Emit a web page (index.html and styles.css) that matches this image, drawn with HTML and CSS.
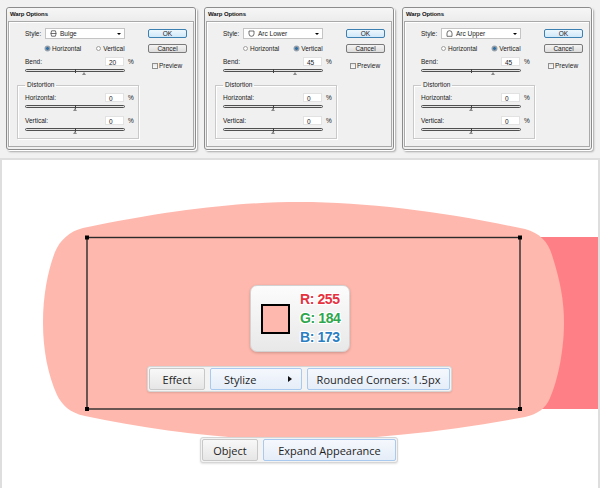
FILE: index.html
```html
<!DOCTYPE html>
<html>

<head>
  <title>Warp Options - Rounded Corners</title>
  <link rel="stylesheet" href="styles.css">
</head>

<body>
  <div class="dialogs">
    <!-- Bulge -->
    <div class="dialog">
      <div class="dialog-title">Warp Options</div>
      <div class="dialog-body">
        <div class="dialog-main">
          <div class="row style-row">
            <span class="lbl">Style:</span>
            <div class="select">
              <svg class="warp-icon" viewBox="0 0 7 7"><path d="M1.6 0.8 Q0.2 3.5 1.6 6.2 H5.4 Q6.8 3.5 5.4 0.8 Z M0.8 3.5 H6.2" /></svg>
              <span class="select-text">Bulge</span>
              <span class="caret"></span>
            </div>
          </div>
          <div class="row radio-row">
            <span class="radio on"></span><span>Horizontal</span>
            <span class="radio second"></span><span>Vertical</span>
          </div>
          <div class="row value-row">
            <span class="lbl">Bend:</span><span class="field">20</span><span class="pct">%</span>
          </div>
          <div class="slider"><i class="tick"></i><i class="thumb" style="left: 60%"></i></div>
          <fieldset class="group">
            <legend>Distortion</legend>
            <div class="row value-row first">
              <span class="lbl">Horizontal:</span><span class="field">0</span><span class="pct">%</span>
            </div>
            <div class="slider"><i class="tick"></i><i class="thumb" style="left: 50%"></i></div>
            <div class="row value-row">
              <span class="lbl">Vertical:</span><span class="field">0</span><span class="pct">%</span>
            </div>
            <div class="slider"><i class="tick"></i><i class="thumb" style="left: 50%"></i></div>
          </fieldset>
        </div>
        <div class="dialog-side">
          <div class="btn default">OK</div>
          <div class="btn">Cancel</div>
          <div class="check"><span class="box"></span>Preview</div>
        </div>
      </div>
    </div>

    <!-- Arc Lower -->
    <div class="dialog">
      <div class="dialog-title">Warp Options</div>
      <div class="dialog-body">
        <div class="dialog-main">
          <div class="row style-row">
            <span class="lbl">Style:</span>
            <div class="select">
              <svg class="warp-icon" viewBox="0 0 7 7"><path d="M1 1 H6 V3.8 Q6 6.3 3.5 6.3 Q1 6.3 1 3.8 Z" /></svg>
              <span class="select-text">Arc Lower</span>
              <span class="caret"></span>
            </div>
          </div>
          <div class="row radio-row">
            <span class="radio"></span><span>Horizontal</span>
            <span class="radio on second"></span><span>Vertical</span>
          </div>
          <div class="row value-row">
            <span class="lbl">Bend:</span><span class="field">45</span><span class="pct">%</span>
          </div>
          <div class="slider"><i class="tick"></i><i class="thumb" style="left: 72.5%"></i></div>
          <fieldset class="group">
            <legend>Distortion</legend>
            <div class="row value-row first">
              <span class="lbl">Horizontal:</span><span class="field">0</span><span class="pct">%</span>
            </div>
            <div class="slider"><i class="tick"></i><i class="thumb" style="left: 50%"></i></div>
            <div class="row value-row">
              <span class="lbl">Vertical:</span><span class="field">0</span><span class="pct">%</span>
            </div>
            <div class="slider"><i class="tick"></i><i class="thumb" style="left: 50%"></i></div>
          </fieldset>
        </div>
        <div class="dialog-side">
          <div class="btn default">OK</div>
          <div class="btn">Cancel</div>
          <div class="check"><span class="box"></span>Preview</div>
        </div>
      </div>
    </div>

    <!-- Arc Upper -->
    <div class="dialog">
      <div class="dialog-title">Warp Options</div>
      <div class="dialog-body">
        <div class="dialog-main">
          <div class="row style-row">
            <span class="lbl">Style:</span>
            <div class="select">
              <svg class="warp-icon" viewBox="0 0 7 7"><path d="M1 6.3 V3.2 Q1 0.7 3.5 0.7 Q6 0.7 6 3.2 V6.3 Z" /></svg>
              <span class="select-text">Arc Upper</span>
              <span class="caret"></span>
            </div>
          </div>
          <div class="row radio-row">
            <span class="radio"></span><span>Horizontal</span>
            <span class="radio on second"></span><span>Vertical</span>
          </div>
          <div class="row value-row">
            <span class="lbl">Bend:</span><span class="field">45</span><span class="pct">%</span>
          </div>
          <div class="slider"><i class="tick"></i><i class="thumb" style="left: 72.5%"></i></div>
          <fieldset class="group">
            <legend>Distortion</legend>
            <div class="row value-row first">
              <span class="lbl">Horizontal:</span><span class="field">0</span><span class="pct">%</span>
            </div>
            <div class="slider"><i class="tick"></i><i class="thumb" style="left: 50%"></i></div>
            <div class="row value-row">
              <span class="lbl">Vertical:</span><span class="field">0</span><span class="pct">%</span>
            </div>
            <div class="slider"><i class="tick"></i><i class="thumb" style="left: 50%"></i></div>
          </fieldset>
        </div>
        <div class="dialog-side">
          <div class="btn default">OK</div>
          <div class="btn">Cancel</div>
          <div class="check"><span class="box"></span>Preview</div>
        </div>
      </div>
    </div>
  </div>

  <div class="artboard">
    <svg class="canvas" viewBox="0 158 598 330">
      <rect x="530" y="237" width="70" height="172" fill="#ff7f86" />
      <path fill="#ffb8ad" d="M83 228 C170 210 240 202 300 202 C370 202 450 213 525 229 C540 233 548 242 552 255
        C560 280 564 300 564 323 C564 350 558 380 550 398 C546 408 538 414 525 417
        C450 431 370 440 300 440 C230 440 150 430 85 416 C70 413 62 405 57 395
        C48 375 43 350 43 323 C43 295 48 270 55 252 C60 240 70 231 83 228 Z" />
      <rect x="87" y="237.5" width="433" height="171.5" fill="none" stroke="#2b2b2b" stroke-width="1.4" />
      <rect x="85" y="235.5" width="4" height="4" />
      <rect x="518" y="235.5" width="4" height="4" />
      <rect x="85" y="407" width="4" height="4" />
      <rect x="518" y="407" width="4" height="4" />
    </svg>

    <div class="swatch-card">
      <span class="swatch"></span>
      <div class="rgb">
        <div class="r">R: 255</div>
        <div class="g">G: 184</div>
        <div class="b">B: 173</div>
      </div>
    </div>

    <div class="crumbs effect-crumbs">
      <div class="crumb plain w-effect">Effect</div>
      <div class="crumb menu w-stylize"><span>Stylize</span><span class="arrow"></span></div>
      <div class="crumb menu w-rounded">Rounded Corners: 1.5px</div>
    </div>

    <div class="crumbs object-crumbs">
      <div class="crumb plain w-effect">Object</div>
      <div class="crumb menu w-expand">Expand Appearance</div>
    </div>
  </div>
</body>

</html>
```

FILE: styles.css
```css
body {
  margin: 0;
  width: 600px;
  height: 488px;
  overflow: hidden;
  background-color: #ffffff;
  font-family: "Liberation Sans", Arial, sans-serif;
}

/* ---------- top strip with the three dialogs ---------- */

.dialogs {
  display: flex;
  gap: 8px;
  height: 158px;
  box-sizing: border-box;
  padding: 7px 0 0 6px;
  background-color: #f1f1f1;
}

.dialog {
  width: 190px;
  height: 143px;
  box-sizing: border-box;
  border: 1px solid #8c8c8c;
  border-radius: 3px;
  background: #f0f0f0;
  box-shadow: 1px 1px 0 #ffffff, 2px 2px 2px rgba(0, 0, 0, 0.3);
  font-size: 6.5px;
  color: #1a1a1a;
}

.dialog-title {
  height: 13px;
  line-height: 13px;
  padding-left: 3px;
  font-size: 6px;
  font-weight: bold;
  letter-spacing: -0.1px;
  color: #111;
  background: linear-gradient(#f6f6f6, #ececec);
  border-radius: 3px 3px 0 0;
}

.dialog-body {
  display: flex;
  margin: 0 1px;
  height: 126px;
  box-sizing: border-box;
  padding: 6px 0 0 16px;
  border: 1px solid #a9a9a9;
  box-shadow: inset 1px 1px 0 #ffffff;
}

.dialog-main {
  width: 110px;
}

.row {
  display: flex;
  align-items: center;
}

.style-row {
  height: 11px;
}

.style-row .lbl {
  width: 20px;
}

.select {
  display: flex;
  align-items: center;
  width: 80px;
  height: 11px;
  box-sizing: border-box;
  padding: 0 3px 0 4px;
  background: #ffffff;
  border: 1px solid #c4c4c4;
}

.warp-icon {
  width: 7px;
  height: 7px;
  fill: none;
  stroke: #333;
  stroke-width: 0.7;
}

.select-text {
  margin-left: 3px;
  flex: 1;
}

.caret {
  width: 0;
  height: 0;
  border-left: 2px solid transparent;
  border-right: 2px solid transparent;
  border-top: 2.5px solid #000;
}

.radio-row {
  height: 10px;
  margin-top: 4px;
  padding-left: 20px;
}

.radio {
  width: 5px;
  height: 5px;
  margin-right: 2px;
  box-sizing: border-box;
  border-radius: 50%;
  border: 1px solid #a0a0a0;
  background: #fbfbfb;
}

.radio.on {
  background: #2d6fa8;
  box-shadow: 0 0 0 0.5px #9aa9b8;
}

.radio.second {
  margin-left: 15px;
}

.value-row {
  height: 9px;
  margin-top: 4px;
}

.value-row .lbl {
  width: 80px;
}

.field {
  width: 19px;
  height: 9px;
  line-height: 9px;
  box-sizing: border-box;
  padding-left: 3px;
  background: #ffffff;
  border: 1px solid #e2e2e2;
}

.pct {
  margin-left: 4px;
}

.slider {
  position: relative;
  width: 100px;
  height: 3px;
  margin-top: 3px;
  box-sizing: border-box;
  border: 1px solid #505050;
  border-radius: 2px;
  background: #e4e4e4;
}

.slider .tick {
  position: absolute;
  left: 49px;
  top: -1px;
  width: 1px;
  height: 4px;
  background: #404040;
}

.slider .thumb {
  position: absolute;
  top: 2px;
  margin-left: -2.5px;
  width: 0;
  height: 0;
  border-left: 2.5px solid transparent;
  border-right: 2.5px solid transparent;
  border-bottom: 3px solid #8a8a8a;
}

.group {
  width: 122px;
  margin: 9px 0 0 -8px;
  padding: 0 0 7px 7px;
  box-sizing: border-box;
  border: 1px solid #c9c9c9;
  box-shadow: inset 1px 1px 0 #ffffff, 1px 1px 0 #ffffff;
}

.group legend {
  padding: 0 2px;
  margin-left: 0;
  line-height: 8px;
}

.group .value-row.first {
  margin-top: 4px;
}

.group .value-row {
  margin-top: 8px;
}

.dialog-side {
  margin-left: 13px;
  width: 39px;
}

.btn {
  height: 9px;
  line-height: 8px;
  box-sizing: border-box;
  margin-top: 1px;
  text-align: center;
  border: 1px solid #7a7a7a;
  border-radius: 2px;
  background: linear-gradient(#f4f4f4, #dcdcdc);
}

.btn.default {
  border-color: #3c7fb1;
  background: linear-gradient(#eef7fd, #cfe8f9);
}

.btn + .btn {
  margin-top: 6px;
}

.check {
  display: flex;
  align-items: center;
  margin: 9px 0 0 4px;
}

.check .box {
  width: 6px;
  height: 6px;
  margin-right: 1px;
  box-sizing: border-box;
  border: 1px solid #8f8f8f;
  background: linear-gradient(#e6e6e6, #fafafa);
}

/* ---------- illustrator canvas ---------- */

.artboard {
  position: relative;
  width: 600px;
  height: 330px;
  box-sizing: border-box;
  border: 2px solid #dedede;
  border-bottom: none;
  background: #ffffff;
}

.canvas {
  position: absolute;
  left: -2px;
  top: -2px;
  width: 598px;
  height: 330px;
}

.swatch-card {
  position: absolute;
  left: 248px;
  top: 125px;
  display: flex;
  align-items: center;
  width: 100px;
  height: 67px;
  box-sizing: border-box;
  padding-left: 10px;
  border: 1px solid #d2d2d2;
  border-radius: 7px;
  background: linear-gradient(#fcfcfc, #e8e8e8);
  box-shadow: 0 1px 3px rgba(0, 0, 0, 0.2);
}

.swatch {
  width: 29px;
  height: 30px;
  box-sizing: border-box;
  border: 2px solid #000;
  background: #ffb8ad;
}

.rgb {
  margin-left: 10px;
  font-size: 14px;
  font-weight: bold;
  line-height: 19px;
  letter-spacing: -0.4px;
  text-shadow: 1px 0 #fff, -1px 0 #fff, 0 1px #fff, 0 -1px #fff,
    1px 1px #fff, -1px -1px #fff, 1px -1px #fff, -1px 1px #fff;
}

.rgb .r {
  color: #e5323f;
}

.rgb .g {
  color: #2ea64c;
}

.rgb .b {
  color: #2c7ec2;
}

.crumbs {
  position: absolute;
  display: flex;
  gap: 5px;
  padding: 1px;
  border: 1px solid #d6d6d6;
  border-radius: 3px;
  background: #f3f3f3;
  box-shadow: 0 1px 2px rgba(0, 0, 0, 0.12);
  font-family: "Open Sans", "Noto Sans", sans-serif;
  font-size: 11px;
  color: #1e1e1e;
}

.effect-crumbs {
  left: 145px;
  top: 206px;
}

.object-crumbs {
  left: 198px;
  top: 277px;
}

.crumb {
  display: flex;
  align-items: center;
  justify-content: center;
  height: 22px;
  box-sizing: border-box;
  border-radius: 2px;
}

.crumb.plain {
  border: 1px solid #c8c8c8;
  background: linear-gradient(#f8f8f8, #e6e6e6);
}

.crumb.menu {
  border: 1px solid #a9c9ee;
  background: linear-gradient(#f5f8fd, #e5edf8);
}

.w-effect {
  width: 56px;
}

.w-stylize {
  width: 92px;
  justify-content: space-between;
  padding: 0 9px 0 13px;
}

.w-rounded {
  width: 143px;
}

.w-expand {
  width: 133px;
}

.arrow {
  width: 0;
  height: 0;
  border-top: 3.5px solid transparent;
  border-bottom: 3.5px solid transparent;
  border-left: 4px solid #111;
}
```
